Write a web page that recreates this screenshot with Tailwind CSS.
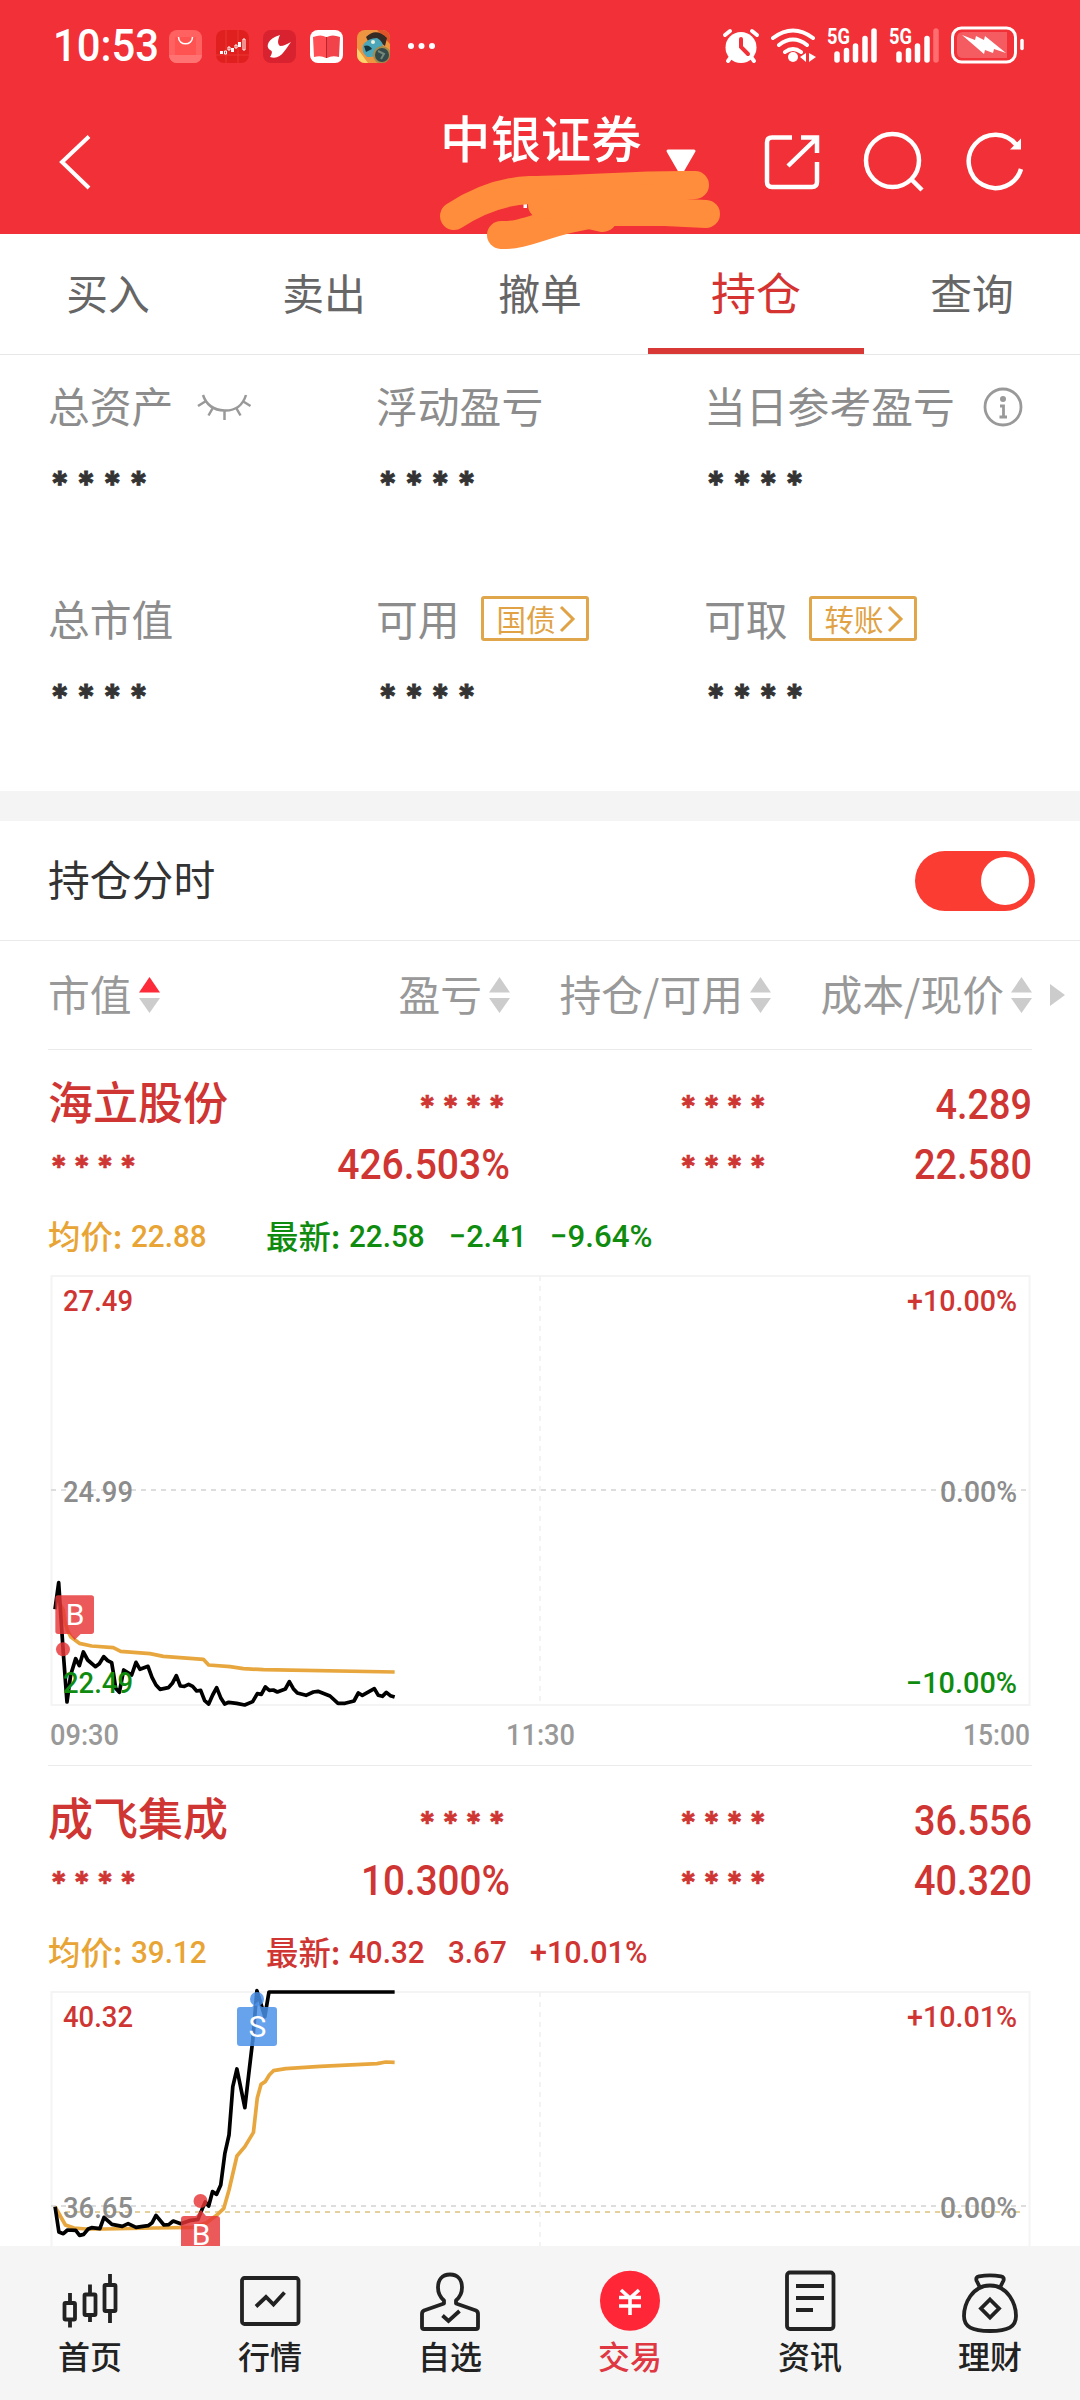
<!DOCTYPE html>
<html lang="zh-CN">
<head>
<meta charset="utf-8">
<title>持仓</title>
<script src="https://cdn.jsdelivr.net/npm/@tailwindcss/browser@4"></script>
</head>
<body class="bg-white">
<div class="relative flex h-[2400px] w-[1080px] flex-col overflow-hidden bg-white font-['Noto_Sans_CJK_SC',sans-serif] text-[41.800px] leading-none text-[#333]">

  <header class="h-[234px] shrink-0 bg-[#f13037] text-white">
    <div class="flex h-[88px] items-center pt-[4px] pl-[53px]">
      <div class="w-[116px] origin-left scale-x-[0.95] font-[Roboto] text-[44px] font-medium">10:53</div>
      <div class="flex items-center gap-[14px]">
        <svg class="size-[33px]" viewBox="0 0 33 33"><rect width="33" height="33" rx="8" fill="#ff6260"/><path d="M6 7h21v18H6z" fill="#ff5351"/><path d="M0 25h33a8 8 0 0 1-8 8H8a8 8 0 0 1-8-8z" fill="#ff7472"/><path d="M9.500 7c0 9 14 9 14 0" fill="none" stroke="#fff" stroke-width="1.500"/></svg>
        <svg class="size-[33px]" viewBox="0 0 33 33"><rect width="33" height="33" rx="8" fill="#e0201f"/><path d="M10 0v33M22 0v33M0 25h33" stroke="#f1433f" stroke-width=".6"/><path d="M4 21h3v3H4zM15 18h3v4h-3zM22 12h3v5h-3z" fill="#fff"/><path d="M8.500 21h2v3h-2zM12 17h2v3h-2zM19 15h2v3h-2zM27 9h2v11h-2z" fill="none" stroke="#fff"/></svg>
        <svg class="size-[33px]" viewBox="0 0 33 33"><rect width="33" height="33" rx="8" fill="#d9222f"/><path d="M17 5C5 8 2 17 7 20c3 1 2 4 0 7 11 4 16-9 21-15-4 2-7 4-11 4-3-2-2-7 0-11z" fill="#fff"/></svg>
        <svg class="size-[33px]" viewBox="0 0 33 33"><rect width="33" height="33" rx="8" fill="#fff"/><path d="M3 7q8-3 13 0v21q-5-3-12-1z" fill="#ff4f55"/><path d="M30 7q-8-3-13 0v21q5-3 12-1z" fill="#f2434a"/><path d="M16.500 7v21" stroke="#b9252c"/></svg>
        <svg class="size-[33px]" viewBox="0 0 33 33"><defs><clipPath id="game"><rect width="33" height="33" rx="8"/></clipPath></defs><g clip-path="url(#game)"><rect width="33" height="33" fill="#ed9540"/><path d="M0 18l11 15H0z" fill="#ffd36c"/><path d="M20 0h13v14z" fill="#e0542a"/><path d="M9 7Q19-3 30 8l-2 8-8-6-9 1z" fill="#352a24"/><path d="M6 15q5-7 14-7 8 4 5 12-6 8-15 7-6-5-4-12z" fill="#4aa6b8"/><path d="M7 16q5-2 8 3l-6 3z" fill="#17343e"/><circle cx="16" cy="12" r="2" fill="#eef3df"/><circle cx="25" cy="25" r="8" fill="#34494a" stroke="#a58b4c" stroke-width="2"/><path d="M21 21l6 3-3 5" stroke="#73877a" stroke-width="2" fill="none"/></g></svg>
        <svg class="ml-[3px] h-[8px] w-[30px]" viewBox="0 0 30 8" fill="#fff"><circle cx="4" cy="4" r="3"/><circle cx="14.500" cy="4" r="3"/><circle cx="25" cy="4" r="3"/></svg>
      </div>
      <svg class="ml-auto h-[44px] w-[360px]" viewBox="720 24 360 44">
        <g stroke="#fff" fill="none" stroke-linecap="round">
          <circle cx="741" cy="47.500" r="15.500" fill="#fff" stroke="none"/>
          <path d="M725 35l5-4M757 35l-5-4M731 57l-3 4M751 57l3 4" stroke-width="4"/>
          <path d="M741 39v8l7 7" stroke="#f13037" stroke-width="4"/>
          <path d="M773 38q20-15 40 0M779 45q14-11 28 0M785 52q8-6 16 0" stroke-width="4"/>
          <circle cx="793" cy="57" r="5" fill="#fff" stroke="none"/>
          <path d="M806 53v9l-6-5zM809 53v9l7-5z" fill="#fff" stroke="none"/>
          <path d="M837 54v6M846.500 50.500v9.500M855.500 46v14M865 38.500v21.500M874 31v29M899 54v6M908.500 50.500v9.500M917.500 46v14M927 38.500v21.500" stroke-width="5.500"/>
          <path d="M936 31v29" stroke-width="5.500" stroke="#ff6d70"/>
          <rect x="952.500" y="28" width="63" height="34" rx="9" stroke-width="3"/>
          <path d="M963 32h44v26h-44q-6 0-6-6V38q0-6 6-6z" fill="#f45c61" stroke="none"/>
          <path d="M1022 40.500v8" stroke-width="3.500"/>
          <path d="M962 35l13 5 1-4 8 4 1-4 21 17-12-4-1 4-8-3-1 4z" fill="#fff" stroke="none"/>
        </g>
        <g fill="#fff" font-family="Roboto" font-size="22" font-weight="700"><text x="827" y="43.500" textLength="23" lengthAdjust="spacingAndGlyphs">5G</text><text x="889" y="43.500" textLength="23" lengthAdjust="spacingAndGlyphs">5G</text></g>
      </svg>
    </div>
    <div class="flex h-[146px] items-center">
      <div class="w-[440px] pl-[56px]"><svg class="h-[60px] w-[36px]" viewBox="56 131 36 60"><path d="M89 136.500L62 162l27 26" fill="none" stroke="#fff" stroke-width="4"/></svg></div>
      <h1 class="w-[204px] pb-[48px] text-[50.400px] font-medium whitespace-nowrap">中银证券</h1>
      <svg class="ml-[20px] h-[26px] w-[34px]" viewBox="664 148 34 26"><path d="M668 151h26l-11 19h-4z" fill="#fff" stroke="#fff" stroke-width="3" stroke-linejoin="round"/></svg>
      <svg class="ml-[64px] h-[60px] w-[60px]" viewBox="762 131 60 60" fill="none" stroke="#fff" stroke-width="4.500"><path d="M792 137.500h-20q-5 0-5 5V182q0 5 5 5h40q5 0 5-5v-20M801 137.500h16V153M816 139l-28 27"/></svg>
      <svg class="ml-[40px] h-[64px] w-[66px]" viewBox="862 129 66 64" fill="none" stroke="#fff" stroke-width="4.500"><circle cx="892.500" cy="160.500" r="26.500"/><path d="M911 179l11 11"/></svg>
      <svg class="ml-[36px] h-[64px] w-[66px]" viewBox="964 129 66 64" fill="none" stroke="#fff" stroke-width="4.500"><path d="M1021 169A26.700 26.700 0 1 1 1016.500 145"/><path d="M1021 138.500v11h-11z" fill="#fff" stroke="none"/></svg>
    </div>
  </header>
  <svg class="absolute top-[160px] left-[430px] h-[95px] w-[300px]" viewBox="430 160 300 95" fill="none" stroke="#ff8d3b" stroke-width="28" stroke-linecap="round" stroke-linejoin="round">
    <path d="M523.500 204h3.500v4h-3.500z" fill="#fff" stroke="none"/>
    <path d="M454 216C480 199 505 191 530 190C590 189 640 184 695 185"/>
    <path d="M501 235C530 236 547 219 610 212H665L706 214"/>
    <path d="M542 205L655 198L590 215L603 218"/>
  </svg>

  <nav class="grid h-[121px] shrink-0 grid-cols-5 border-b border-[#e8e8e8] text-center text-[#666]">
    <div class="pt-[38px]">买入</div>
    <div class="pt-[38px]">卖出</div>
    <div class="pt-[38px]">撤单</div>
    <div class="border-b-[6px] border-[#d83836] pt-[35px] text-[45px] text-[#d43331]">持仓</div>
    <div class="pt-[38px]">查询</div>
  </nav>

  <section class="grid h-[436px] shrink-0 grid-cols-[328px_328px_328px] grid-rows-[213px_213px] pl-[48px] text-[#8c8c8c]">
    <div>
      <div class="flex h-[104px] items-center pb-[3px]">总资产<svg class="mt-[3px] ml-[24px] h-[30px] w-[56px]" viewBox="198 392 56 30" fill="none" stroke="#999" stroke-width="2.500"><path d="M204 395q5 15 21.500 15.500T247 395M207 401l-8 5M243.500 401l8 5M213.500 408.500l-4 7M237.500 408.500l4 7M225.500 411v9"/></svg></div>
      <div class="pt-[8px] pl-[2px] font-[Inter] text-[35px] font-bold tracking-[6.700px] text-[#333] [-webkit-text-stroke:0.8px]">****</div>
    </div>
    <div>
      <div class="flex h-[104px] items-center pb-[3px]">浮动盈亏</div>
      <div class="pt-[8px] pl-[2px] font-[Inter] text-[35px] font-bold tracking-[6.700px] text-[#333] [-webkit-text-stroke:0.8px]">****</div>
    </div>
    <div>
      <div class="flex h-[104px] items-center pb-[3px] whitespace-nowrap">当日参考盈亏<svg class="mt-[2px] ml-[28px] size-[40px] shrink-0" viewBox="0 0 40 40" fill="none" stroke="#999" stroke-width="2.800"><circle cx="20" cy="20" r="18"/><circle cx="20" cy="12" r="3" fill="#999" stroke="none"/><path d="M17 19h3.500v11M16.500 30h7.500"/></svg></div>
      <div class="pt-[8px] pl-[2px] font-[Inter] text-[35px] font-bold tracking-[6.700px] text-[#333] [-webkit-text-stroke:0.8px]">****</div>
    </div>
    <div>
      <div class="flex h-[104px] items-center pb-[3px]">总市值</div>
      <div class="pt-[8px] pl-[2px] font-[Inter] text-[35px] font-bold tracking-[6.700px] text-[#333] [-webkit-text-stroke:0.8px]">****</div>
    </div>
    <div>
      <div class="flex h-[104px] items-center pb-[3px]">可用<div class="ml-[21px] flex h-[45px] w-[108px] items-center rounded-[3px] border-[3px] border-[#dfa64c] pl-[13px] text-[29.500px] text-[#e0a244]">国债<svg class="ml-[3px] h-[28px] w-[18px]" viewBox="0 0 18 28" fill="none" stroke="#e0a244" stroke-width="3"><path d="M2 2l12 12L2 26"/></svg></div></div>
      <div class="pt-[8px] pl-[2px] font-[Inter] text-[35px] font-bold tracking-[6.700px] text-[#333] [-webkit-text-stroke:0.8px]">****</div>
    </div>
    <div>
      <div class="flex h-[104px] items-center pb-[3px]">可取<div class="ml-[21px] flex h-[45px] w-[108px] items-center rounded-[3px] border-[3px] border-[#dfa64c] pl-[13px] text-[29.500px] text-[#e0a244]">转账<svg class="ml-[3px] h-[28px] w-[18px]" viewBox="0 0 18 28" fill="none" stroke="#e0a244" stroke-width="3"><path d="M2 2l12 12L2 26"/></svg></div></div>
      <div class="pt-[8px] pl-[2px] font-[Inter] text-[35px] font-bold tracking-[6.700px] text-[#333] [-webkit-text-stroke:0.8px]">****</div>
    </div>
  </section>

  <div class="h-[30px] shrink-0 bg-[#f4f4f4]"></div>

  <div class="flex h-[120px] shrink-0 items-center justify-between border-b border-[#ebebeb] pr-[45px] pl-[48px]">
    <div class="pb-[3px]">持仓分时</div>
    <div class="flex h-[60px] w-[120px] items-center justify-end rounded-full bg-[#fa3c32] pr-[6px]"><div class="size-[48px] rounded-full bg-white"></div></div>
  </div>

  <div class="flex h-[108px] shrink-0 items-center text-[#999]">
    <div class="grid w-[1032px] shrink-0 grid-cols-[201px_261px_261px_261px] pl-[48px] whitespace-nowrap">
      <div class="flex items-center gap-[7px]"><span class="pb-[3px]">市值</span><svg class="h-[36px] w-[21px]" viewBox="0 0 21 36"><path d="M0 15.500L10.500 0 21 15.500z" fill="#fd2b3a"/><path d="M0 21L10.500 36 21 21z" fill="#ccc"/></svg></div>
      <div class="flex items-center justify-end gap-[7px]"><span class="pb-[3px]">盈亏</span><svg class="h-[36px] w-[21px]" viewBox="0 0 21 36" fill="#ccc"><path d="M0 15.500L10.500 0 21 15.500zM0 21L10.500 36 21 21z"/></svg></div>
      <div class="flex items-center justify-end gap-[7px]"><span class="pb-[3px]">持仓/可用</span><svg class="h-[36px] w-[21px]" viewBox="0 0 21 36" fill="#ccc"><path d="M0 15.500L10.500 0 21 15.500zM0 21L10.500 36 21 21z"/></svg></div>
      <div class="flex items-center justify-end gap-[7px]"><span class="pb-[3px]">成本/现价</span><svg class="h-[36px] w-[21px]" viewBox="0 0 21 36" fill="#ccc"><path d="M0 15.500L10.500 0 21 15.500zM0 21L10.500 36 21 21z"/></svg></div>
    </div>
    <svg class="ml-[18px] h-[22px] w-[15px]" viewBox="0 0 15 22" fill="#ccc"><path d="M0 0l15 11L0 22z"/></svg>
  </div>

  <main class="min-h-0 flex-1 overflow-hidden px-[48px]">
    <article class="h-[716px] border-t border-[#ebebeb] text-[#cf3532]">
      <div class="grid h-[144px] grid-cols-[201px_261px_261px_261px] grid-rows-[60px_60px] items-center pt-[23px]">
        <div class="pb-[5px] text-[45px] font-medium whitespace-nowrap">海立股份</div>
        <div class="-mr-[1px] pt-[7px] text-right font-[Inter] text-[31.500px] font-bold tracking-[5.500px] [-webkit-text-stroke:0.5px]">****</div>
        <div class="-mr-[1px] pt-[7px] text-right font-[Inter] text-[31.500px] font-bold tracking-[5.500px] [-webkit-text-stroke:0.5px]">****</div>
        <div class="origin-right scale-x-[0.9] pt-[3px] text-right font-[Roboto] text-[42px] font-medium">4.289</div>
        <div class="pt-[7px] pl-[2px] font-[Inter] text-[31.500px] font-bold tracking-[5.500px] [-webkit-text-stroke:0.5px]">****</div>
        <div class="origin-right scale-x-[0.93] pt-[3px] text-right font-[Roboto] text-[42px] font-medium">426.503%</div>
        <div class="-mr-[1px] pt-[7px] text-right font-[Inter] text-[31.500px] font-bold tracking-[5.500px] [-webkit-text-stroke:0.5px]">****</div>
        <div class="origin-right scale-x-[0.9] pt-[3px] text-right font-[Roboto] text-[42px] font-medium">22.580</div>
      </div>
      <div class="flex h-[72px] items-center pt-[14px] text-[32.400px] whitespace-nowrap text-[#0f8c0f]">
        <div class="w-[83px] pb-[4px] font-medium text-[#e8a435]">均价:</div>
        <div class="w-[135px] origin-left scale-x-[0.94] font-[Roboto] text-[31.500px] font-medium text-[#e8a435]">22.88</div>
        <div class="w-[83px] pb-[4px] font-medium">最新:</div>
        <div class="w-[100px] origin-left scale-x-[0.94] font-[Roboto] text-[31.500px] font-medium">22.58</div>
        <div class="w-[101px] origin-left scale-x-[0.97] font-[Roboto] text-[31.500px] font-medium">−2.41</div>
        <div class="origin-left scale-x-[0.99] font-[Roboto] text-[31.500px] font-medium">−9.64%</div>
      </div>
      <svg class="block h-[490px] w-[984px]" viewBox="48 1266 984 490" font-family="Roboto" font-size="29.500" font-weight="500">
        <rect x="51.500" y="1276" width="978" height="429" fill="none" stroke="#f4f4f4" stroke-width="2"/>
        <path d="M51 1490h978" stroke="#ddd" stroke-width="2" stroke-dasharray="5 5"/>
        <path d="M540 1276v429" stroke="#efefef" stroke-width="1.500" stroke-dasharray="5 5"/>
        <g transform="translate(30 1260) scale(.33333)" fill="none" stroke-linejoin="round">
          <polyline vector-effect="non-scaling-stroke" stroke="#e8a73e" stroke-width="3.700" points="92,1035 100,1050 105,1085 112,1110 122,1130 148,1150 185,1158 250,1163 272,1174 360,1181 400,1189 520,1198 536,1215 600,1220 640,1226 700,1229 1094,1236"/>
          <polyline vector-effect="non-scaling-stroke" stroke="#000" stroke-width="3.700" points="75,1048 86,968 92,1060 100,1180 111,1326 122,1245 137,1196 148,1217 160,1176 173,1200 196,1220 208,1211 221,1190 233,1202 245,1208 252,1250 257,1285 268,1297 281,1230 305,1245 318,1207 330,1228 354,1219 366,1252 378,1275 390,1288 415,1283 427,1270 439,1247 451,1278 463,1279 476,1273 488,1279 500,1293 512,1291 524,1322 536,1332 548,1305 560,1283 572,1313 584,1332 596,1327 620,1330 644,1335 668,1325 682,1301 694,1303 706,1281 718,1291 730,1290 742,1296 766,1287 778,1265 790,1286 802,1299 828,1306 850,1296 864,1294 900,1308 924,1330 945,1330 972,1323 985,1299 997,1306 1033,1286 1045,1306 1057,1309 1069,1297 1081,1307 1094,1311"/>
          <g fill="#e63437" fill-opacity=".82"><path d="M84 1006h100q8 0 8 8v100q0 8-8 8h-32l-18 18-16-18H84q-8 0-8-8v-100q0-8 8-8z"/><circle cx="99" cy="1168" r="21"/></g>
        </g>
        <text x="75" y="1625" text-anchor="middle" fill="#fff" font-size="30" font-weight="400">B</text>
        <g fill="#cf3532"><text x="63" y="1311" textLength="70" lengthAdjust="spacingAndGlyphs">27.49</text><text x="907" y="1311" textLength="110" lengthAdjust="spacingAndGlyphs">+10.00%</text></g>
        <g fill="#8c8c8c"><text x="63" y="1502" textLength="70" lengthAdjust="spacingAndGlyphs">24.99</text><text x="940" y="1502" textLength="77" lengthAdjust="spacingAndGlyphs">0.00%</text></g>
        <g fill="#0f8c0f"><text x="63" y="1693" textLength="70" lengthAdjust="spacingAndGlyphs">22.49</text><text x="906" y="1693" textLength="111" lengthAdjust="spacingAndGlyphs">−10.00%</text></g>
        <g fill="#999"><text x="50" y="1745" textLength="69" lengthAdjust="spacingAndGlyphs">09:30</text><text x="506" y="1745" textLength="69" lengthAdjust="spacingAndGlyphs">11:30</text><text x="963" y="1745" textLength="67" lengthAdjust="spacingAndGlyphs">15:00</text></g>
      </svg>
    </article>

    <article class="h-[716px] border-t border-[#ebebeb] text-[#cf3532]">
      <div class="grid h-[144px] grid-cols-[201px_261px_261px_261px] grid-rows-[60px_60px] items-center pt-[23px]">
        <div class="pb-[5px] text-[45px] font-medium whitespace-nowrap">成飞集成</div>
        <div class="-mr-[1px] pt-[7px] text-right font-[Inter] text-[31.500px] font-bold tracking-[5.500px] [-webkit-text-stroke:0.5px]">****</div>
        <div class="-mr-[1px] pt-[7px] text-right font-[Inter] text-[31.500px] font-bold tracking-[5.500px] [-webkit-text-stroke:0.5px]">****</div>
        <div class="origin-right scale-x-[0.9] pt-[3px] text-right font-[Roboto] text-[42px] font-medium">36.556</div>
        <div class="pt-[7px] pl-[2px] font-[Inter] text-[31.500px] font-bold tracking-[5.500px] [-webkit-text-stroke:0.5px]">****</div>
        <div class="origin-right scale-x-[0.92] pt-[3px] text-right font-[Roboto] text-[42px] font-medium">10.300%</div>
        <div class="-mr-[1px] pt-[7px] text-right font-[Inter] text-[31.500px] font-bold tracking-[5.500px] [-webkit-text-stroke:0.5px]">****</div>
        <div class="origin-right scale-x-[0.9] pt-[3px] text-right font-[Roboto] text-[42px] font-medium">40.320</div>
      </div>
      <div class="flex h-[72px] items-center pt-[14px] text-[32.400px] whitespace-nowrap">
        <div class="w-[83px] pb-[4px] font-medium text-[#e8a435]">均价:</div>
        <div class="w-[135px] origin-left scale-x-[0.94] font-[Roboto] text-[31.500px] font-medium text-[#e8a435]">39.12</div>
        <div class="w-[83px] pb-[4px] font-medium">最新:</div>
        <div class="w-[99px] origin-left scale-x-[0.94] font-[Roboto] text-[31.500px] font-medium">40.32</div>
        <div class="w-[82px] origin-left scale-x-[0.94] font-[Roboto] text-[31.500px] font-medium">3.67</div>
        <div class="origin-left scale-x-[0.97] font-[Roboto] text-[31.500px] font-medium">+10.01%</div>
      </div>
      <svg class="block h-[490px] w-[984px]" viewBox="48 1982 984 490" font-family="Roboto" font-size="29.500" font-weight="500">
        <rect x="51.500" y="1992" width="978" height="429" fill="none" stroke="#f4f4f4" stroke-width="2"/>
        <path d="M51 2206h978" stroke="#ddd" stroke-width="2" stroke-dasharray="5 5"/>
        <path d="M55 2212h967" stroke="#e3d09c" stroke-width="2" stroke-dasharray="5 5"/>
        <path d="M540 1992v429" stroke="#efefef" stroke-width="1.500" stroke-dasharray="5 5"/>
        <g transform="translate(0 1750) scale(.34437 .33333)" fill="none" stroke-linejoin="round">
          <polyline vector-effect="non-scaling-stroke" stroke="#e8a73e" stroke-width="3.700" points="160,1370 175,1398 190,1425 215,1434 250,1437 300,1437 450,1434 560,1432 600,1418 630,1395 650,1375 665,1320 688,1218 711,1190 736,1147 747,1045 758,1003 770,995 782,975 794,962 830,956 930,949 1095,941 1120,936 1146,937"/>
          <polyline vector-effect="non-scaling-stroke" stroke="#000" stroke-width="3.700" points="160,1370 171,1446 184,1451 196,1440 220,1441 231,1456 243,1453 256,1437 266,1433 290,1436 302,1402 325,1423 355,1429 372,1421 395,1432 430,1427 442,1418 453,1396 476,1425 490,1424 503,1413 525,1421 550,1412 575,1408 590,1370 596,1356 606,1368 617,1325 629,1333 641,1305 653,1210 665,1155 676,1010 688,957 711,1073 722,975 734,870 746,722 769,800 781,726 1146,726"/>
        </g>
        <g fill="#4a90ea" fill-opacity=".84"><circle cx="257" cy="1999" r="7"/><path d="M240 2007h12l5-5 5 5h12q3 0 3 3v33q0 3-3 3h-34q-3 0-3-3v-33q0-3 3-3z"/></g>
        <g fill="#e63437" fill-opacity=".82"><circle cx="200.500" cy="2201" r="7"/><path d="M184 2216h12l5-6 5 6h11q3 0 3 3v33q0 3-3 3h-33q-3 0-3-3v-33q0-3 3-3z"/></g>
        <g fill="#fff" text-anchor="middle" font-size="30" font-weight="400"><text x="257.500" y="2037">S</text><text x="201" y="2244.500">B</text></g>
        <g fill="#cf3532"><text x="63" y="2027" textLength="70" lengthAdjust="spacingAndGlyphs">40.32</text><text x="907" y="2027" textLength="110" lengthAdjust="spacingAndGlyphs">+10.01%</text></g>
        <g fill="#8c8c8c"><text x="63" y="2218" textLength="70" lengthAdjust="spacingAndGlyphs">36.65</text><text x="940" y="2218" textLength="77" lengthAdjust="spacingAndGlyphs">0.00%</text></g>
      </svg>
    </article>
  </main>

  <footer class="grid h-[154px] shrink-0 grid-cols-6 bg-[#f5f5f5] pt-[20px] text-center text-[32px] font-medium text-[#222]">
    <div><svg class="-mb-[1px] block h-[74px] w-[180px]" viewBox="0 0 180 74" fill="none" stroke="#222" stroke-width="3.800"><rect x="64.500" y="37" width="10.500" height="16.500" rx="1"/><rect x="84.500" y="28.500" width="11" height="20.500" rx="1"/><rect x="104.500" y="19" width="11" height="26" rx="1"/><path d="M70 27v9M70 55v6.500M90 18.500v9M90 50v6M110 8v10M110 46v11"/></svg>首页</div>
    <div><svg class="-mb-[1px] block h-[74px] w-[180px]" viewBox="0 0 180 74" fill="none" stroke="#222" stroke-width="3.800"><rect x="62" y="12" width="56.500" height="46" rx="2.500"/><path d="M76 40.500l10-9.500 7.500 7.500 11-12"/></svg>行情</div>
    <div><svg class="-mb-[1px] block h-[74px] w-[180px]" viewBox="0 0 180 74" fill="none" stroke="#222" stroke-width="3.800" stroke-linejoin="round"><path d="M84 34.500C80 31 78 27 78 21.500C78 14 82 8.500 90 8.500S102 14 102 21.500C102 27 100 31 96 34.500V37.500L116 44.500Q118 45.500 118 48V61Q118 63 116 63H64Q62 63 62 61V48Q62 45.500 64 44.500L84 37.500z"/><path d="M82.500 49.500l6 5.500 11-10" stroke-linejoin="miter"/></svg>自选</div>
    <div class="text-[#df3843]"><svg class="-mb-[1px] block h-[74px] w-[180px]" viewBox="0 0 180 74" fill="none" stroke="#fff" stroke-width="3.600"><circle cx="90" cy="34.700" r="30" fill="#ff2638" stroke="none"/><path d="M81 24l9 8 9-8M79 31.500h22M79 40h22M90 31v18"/></svg>交易</div>
    <div><svg class="-mb-[1px] block h-[74px] w-[180px]" viewBox="0 0 180 74" fill="none" stroke="#222" stroke-width="3.800"><rect x="67" y="6.500" width="46.500" height="56.500" rx="3"/><path d="M76 20h28M76 32h28M76 44h17"/></svg>资讯</div>
    <div><svg class="-mb-[1px] block h-[74px] w-[180px]" viewBox="0 0 180 74" fill="none" stroke="#222" stroke-width="3.800" stroke-linejoin="round"><path d="M80 21.500L76.500 14.500Q75.500 11 79 10.300Q90 8.500 101 10.300Q104.500 11 103.500 14.500L100 21.500"/><path d="M90 19.500C72 19.500 64 38 64 50C64 61 72 65 90 65S116 61 116 50C116 38 108 19.500 90 19.500z"/><path d="M90 33.500l9 9-9 9-9-9z" stroke-linejoin="miter"/></svg>理财</div>
  </footer>
</div>
</body>
</html>
